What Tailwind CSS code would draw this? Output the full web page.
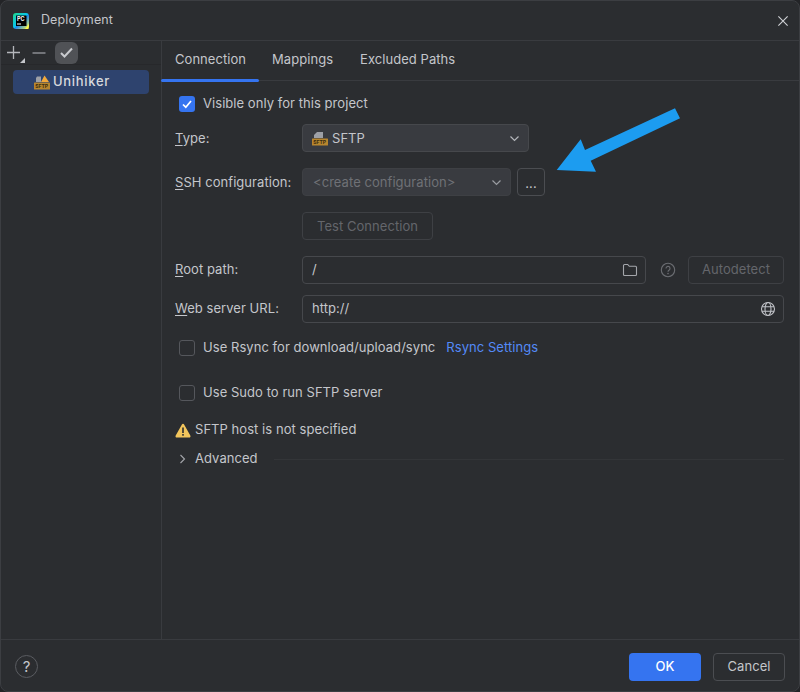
<!DOCTYPE html>
<html><head><meta charset="utf-8">
<script src="https://cdn.jsdelivr.net/npm/@tailwindcss/browser@4"></script>
</head>
<body class="m-0 bg-[#1e1f22]">
<div class="relative w-[800px] h-[692px] overflow-hidden bg-[#232427] font-['Inter','Liberation_Sans',sans-serif] text-[13px] tracking-[0.05px] text-[#c4c6cb] antialiased">
  <div class="w-[800px] h-[692px] rounded-lg border border-[#3c3e42] bg-[#2b2d30] flex flex-col">
    <!-- title -->
    <div class="h-[40px] shrink-0 border-b border-[#393b3f] flex items-center pl-[11px] pr-[10px]">
      <svg class="w-[18px] h-[18px]" viewBox="0 0 18 18"><defs><linearGradient id="g" x1="0" y1="0" x2="1" y2="1"><stop offset="0" stop-color="#21d789"/><stop offset=".5" stop-color="#07c3f2"/><stop offset=".5" stop-color="#087cfa"/><stop offset="1" stop-color="#fcf84a"/></linearGradient></defs><rect x="1" y="1" width="16" height="16" rx="3" fill="url(#g)"/><path d="M13 17h3.500l.5-5z" fill="#fcf84a"/><rect x="4" y="3.500" width="10.500" height="10.500" fill="#000"/><text x="5" y="9" font-size="5.500" font-weight="700" fill="#fff" font-family="Inter">PC</text><rect x="5" y="11.500" width="4" height="1" fill="#fff"/></svg>
      <span class="ml-[11px] text-[#c2c4c9] text-[12.500px] tracking-[0.1px]">Deployment</span>
      <svg class="ml-auto w-[12px] h-[12px]" viewBox="0 0 13 13" fill="none" stroke="#d0d2d6" stroke-width="1.200"><path d="M1.500 1.500l10 10M11.500 1.500l-10 10"/></svg>
    </div>
    <div class="flex-1 flex min-h-0">
      <!-- sidebar -->
      <div class="w-[161px] shrink-0 border-r border-[#393b3f] flex flex-col">
        <div class="h-[24px] shrink-0 border-b border-[#27282b] flex items-center pl-[5px] gap-[7px]">
          <span class="relative block w-[18px] h-[18px]">
            <svg class="w-[18px] h-[18px]" viewBox="0 0 18 18" fill="none" stroke="#b4b6bb" stroke-width="1.300"><path d="M7.500 2v13M1 8.500h13"/></svg>
            <svg class="absolute right-[-1px] bottom-[-1px] w-[5px] h-[5px]" viewBox="0 0 5 5"><path d="M5 0v5H0z" fill="#c4c6cb"/></svg>
          </span>
          <svg class="w-[16px] h-[16px]" viewBox="0 0 16 16" fill="none" stroke="#9a9ca1" stroke-width="1.300"><path d="M1.500 8h13"/></svg>
          <span class="ml-[1px] w-[23px] h-[22px] rounded-[6px] bg-[#505256] flex items-center justify-center">
            <svg class="w-[15px] h-[15px]" viewBox="0 0 15 15" fill="none" stroke="#c8cace" stroke-width="2"><path d="M2 8l3.500 3.500L13 3.500"/></svg>
          </span>
        </div>
        <div class="mx-[12px] mt-[5px] h-[24px] rounded-[4px] bg-[#2e436e] flex items-center pl-[21px] text-[#d7d9dd] font-medium tracking-[0.7px]">
          <svg class="w-[16px] h-[18px] shrink-0" viewBox="0 0 16 18"><path d="M3 3.500h4v5.500H2V5z" fill="#9da0a6"/><path d="M10.500 2.500L15 9H7z" fill="#f2a93b"/><rect x="0" y="9.500" width="16" height="7" rx=".5" fill="#b8862e"/><text x="1.300" y="15.300" font-size="5" font-weight="700" letter-spacing="0" fill="#3a2c10" font-family="Inter">SFTP</text></svg>
          <span class="ml-[3px]">Unihiker</span>
        </div>
      </div>
      <!-- main -->
      <div class="flex-1 min-w-0 flex flex-col">
        <div class="h-[40px] pb-[2px] shrink-0 border-b border-[#393b3f] relative flex items-center text-[13px] text-[#c4c6cb]">
          <span class="ml-[13px]">Connection</span>
          <span class="ml-[26px]">Mappings</span>
          <span class="ml-[27px]">Excluded Paths</span>
          <span class="absolute left-[-1px] bottom-[-2px] h-[3px] w-[98px] rounded-sm bg-[#3574f0]"></span>
        </div>
        <div class="pl-[13px] pr-[15px] flex flex-col">
          <!-- visible -->
          <div class="mt-[13px] h-[20px] flex items-center pl-[4px]">
            <span class="w-[16px] h-[16px] rounded-[3px] bg-[#3574f0] flex items-center justify-center">
              <svg class="w-[12px] h-[12px]" viewBox="0 0 12 12" fill="none" stroke="#fff" stroke-width="1.700"><path d="M2 6.500l2.800 2.700L10 3"/></svg>
            </span>
            <span class="ml-[8px]">Visible only for this project</span>
          </div>
          <!-- type -->
          <div class="mt-[10px] flex items-center h-[28px]">
            <span class="w-[127px] pt-[2px]"><span class="underline underline-offset-2">T</span>ype:</span>
            <div class="w-[227px] h-[28px] rounded-[4px] border border-[#46484c] bg-[#393b40] flex items-center pl-[9px] pr-[8px]">
              <svg class="w-[16px] h-[18px] shrink-0" viewBox="0 0 16 18"><path d="M5 3h6v6H2V6z" fill="#9da0a6"/><rect x="0" y="9.500" width="16" height="7" rx=".5" fill="#b8862e"/><text x="1.300" y="15.300" font-size="5" font-weight="700" letter-spacing="0" fill="#3a2c10" font-family="Inter">SFTP</text></svg>
              <span class="ml-[4px] pt-[2px]">SFTP</span>
              <svg class="ml-auto w-[11px] h-[11px]" viewBox="0 0 11 11" fill="none" stroke="#b4b6bb" stroke-width="1.200"><path d="M1.500 3.500l4 4 4-4"/></svg>
            </div>
          </div>
          <!-- ssh -->
          <div class="mt-[16px] flex items-center h-[28px]">
            <span class="w-[127px] pt-[2px]"><span class="underline underline-offset-2">S</span>SH configuration:</span>
            <div class="w-[209px] h-[28px] rounded-[4px] border border-[#3e4044] bg-[#393b40] flex items-center pl-[10px] pr-[8px] text-[#6f7176]">
              <span class="pt-[2px]">&lt;create configuration&gt;</span>
              <svg class="ml-auto w-[11px] h-[11px]" viewBox="0 0 11 11" fill="none" stroke="#9a9ca1" stroke-width="1.200"><path d="M1.500 3.500l4 4 4-4"/></svg>
            </div>
            <div class="ml-[6px] w-[28px] h-[28px] rounded-[4px] border border-[#4b4d51] flex items-center justify-center text-[#c4c6cb] leading-none pt-[2px]">...</div>
          </div>
          <!-- test -->
          <div class="mt-[16px] ml-[127px] w-[131px] h-[28px] pt-[2px] rounded-[4px] border border-[#3e4044] flex items-center justify-center text-[#64666b]">Test Connection</div>
          <!-- root -->
          <div class="mt-[16px] flex items-center h-[28px]">
            <span class="w-[127px]"><span class="underline underline-offset-2">R</span>oot path:</span>
            <div class="w-[344px] h-[28px] rounded-[4px] border border-[#46484c] flex items-center pl-[9px] pr-[7px]">
              <span>/</span>
              <svg class="ml-auto w-[16px] h-[16px]" viewBox="0 0 16 16" fill="none" stroke="#a4a6ab" stroke-width="1.100"><path d="M1.500 3.500a1 1 0 0 1 1-1h3.200l1.600 1.800h6.200a1 1 0 0 1 1 1v7.200a1 1 0 0 1-1 1h-11a1 1 0 0 1-1-1z"/></svg>
            </div>
            <svg class="ml-[14px] w-[16px] h-[16px]" viewBox="0 0 16 16" fill="none"><circle cx="8" cy="8" r="6.700" stroke="#6b6d72" stroke-width="1.100"/><path d="M6 6.400a2 2 0 1 1 3.200 1.600c-.8.500-1.200 1-1.200 1.800" stroke="#6b6d72" stroke-width="1.100"/><circle cx="8" cy="11.600" r=".8" fill="#6b6d72"/></svg>
            <div class="ml-[12px] w-[96px] h-[28px] rounded-[4px] border border-[#3e4044] flex items-center justify-center text-[#64666b]">Autodetect</div>
          </div>
          <!-- web -->
          <div class="mt-[11px] flex items-center h-[28px]">
            <span class="w-[127px]"><span class="underline underline-offset-2">W</span>eb server URL:</span>
            <div class="w-[482px] h-[28px] rounded-[4px] border border-[#46484c] flex items-center pl-[9px] pr-[7px]">
              <span>http://</span>
              <svg class="ml-auto w-[16px] h-[16px]" viewBox="0 0 16 16" fill="none" stroke="#c0c2c7" stroke-width="1.100"><circle cx="8" cy="8" r="6.500"/><ellipse cx="8" cy="8" rx="3" ry="6.500"/><path d="M2 5.800h12M2 10.200h12"/></svg>
            </div>
          </div>
          <!-- rsync -->
          <div class="mt-[15px] h-[20px] flex items-center pl-[4px]">
            <span class="w-[16px] h-[16px] rounded-[3px] border border-[#55575c]"></span>
            <span class="ml-[8px]">Use Rsync for download/upload/sync</span>
            <span class="ml-[11px] text-[#548af7]">Rsync Settings</span>
          </div>
          <!-- sudo -->
          <div class="mt-[25px] h-[20px] flex items-center pl-[4px]">
            <span class="w-[16px] h-[16px] rounded-[3px] border border-[#55575c]"></span>
            <span class="ml-[8px]">Use Sudo to run SFTP server</span>
          </div>
          <!-- warn -->
          <div class="mt-[17px] h-[20px] flex items-center">
            <svg class="w-[16px] h-[15px] shrink-0" viewBox="0 0 16 15"><path d="M8 .8a1.300 1.300 0 0 1 1.100.7l6.200 11.100a1.300 1.300 0 0 1-1.100 2H1.800a1.300 1.300 0 0 1-1.100-2L6.900 1.500A1.300 1.300 0 0 1 8 .8z" fill="#f2c55c"/><rect x="7.200" y="4.500" width="1.600" height="5.500" fill="#2b2d30"/><rect x="7.200" y="11" width="1.600" height="1.700" fill="#2b2d30"/></svg>
            <span class="ml-[4px]">SFTP host is not specified</span>
          </div>
          <!-- advanced -->
          <div class="mt-[9px] h-[20px] flex items-center">
            <svg class="ml-[3px] w-[9px] h-[10px] shrink-0" viewBox="0 0 9 10" fill="none" stroke="#a4a6ab" stroke-width="1.100"><path d="M2.500 1l4 4-4 4"/></svg>
            <span class="ml-[8px]">Advanced</span>
            <span class="ml-[16px] flex-1 h-px bg-[#333538]"></span>
          </div>
        </div>
      </div>
    </div>
    <!-- footer -->
    <div class="h-[52px] pt-[2px] shrink-0 border-t border-[#393b3f] flex items-center pl-[14px] pr-[14px]">
      <span class="w-[23px] h-[23px] rounded-full border border-[#5a5c61] flex items-center justify-center text-[#c4c6cb] text-[15px] leading-none">?</span>
      <span class="ml-auto w-[72px] h-[28px] rounded-[4px] bg-[#3574f0] flex items-center justify-center text-white font-medium">OK</span>
      <span class="ml-[12px] w-[72px] h-[28px] rounded-[4px] border border-[#4b4d51] flex items-center justify-center">Cancel</span>
    </div>
  </div>
  <!-- annotation arrow -->
  <svg class="absolute left-[550px] top-[100px] w-[135px] h-[75px]" viewBox="0 0 135 75"><path d="M125 8.300L130 18.300L40.700 60.700L46 71.700L6.700 70L30.700 39.300L35 50z" fill="#1c9cf0"/></svg>
</div>
</body></html>
